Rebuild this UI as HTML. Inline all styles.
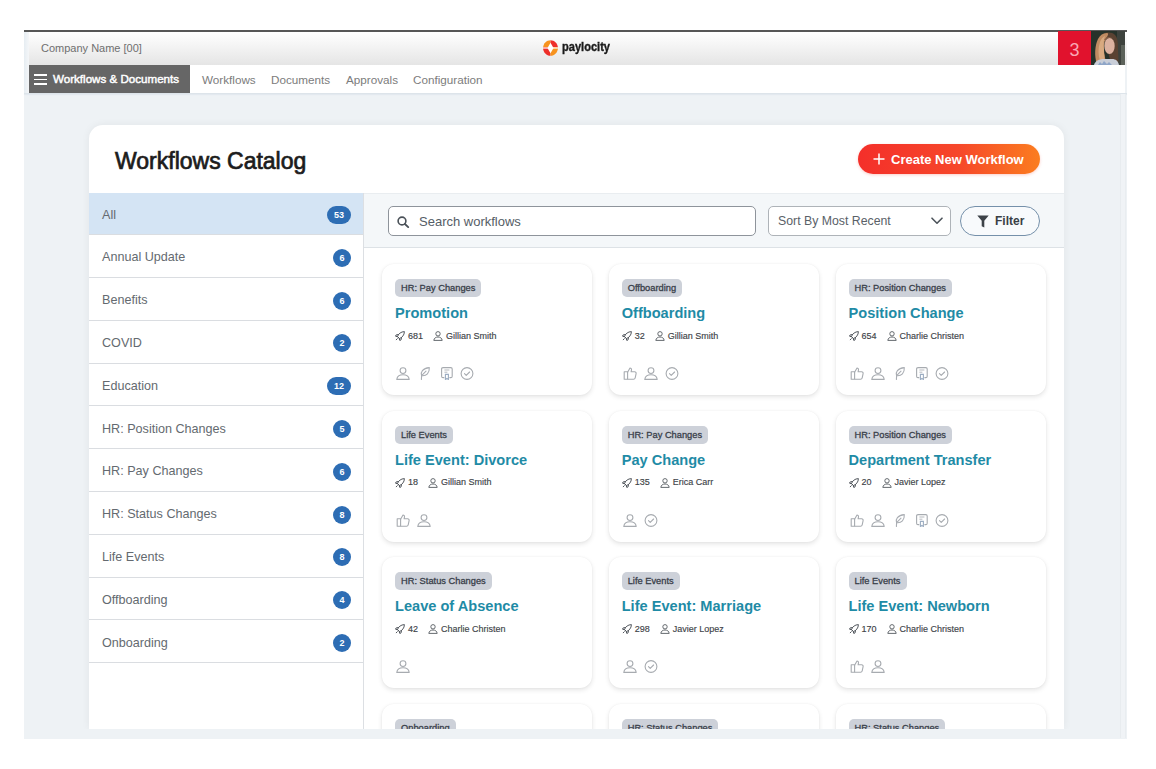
<!DOCTYPE html>
<html><head><meta charset="utf-8">
<style>
*{box-sizing:border-box;margin:0;padding:0}
html,body{width:1156px;height:769px;overflow:hidden;background:#fff;font-family:"Liberation Sans",sans-serif}
.abs{position:absolute}
#frame{position:absolute;left:24px;top:30px;width:1103px;height:709px;background:#eef2f5;overflow:hidden}
#topline{position:absolute;left:24px;top:30px;width:1103px;height:2px;background:#575757}
#hdr{position:absolute;left:24px;top:32px;width:1103px;height:33px;background:linear-gradient(#ffffff,#e5e5e5)}
#leftstrip{position:absolute;left:24px;top:32px;width:5px;height:62px;background:linear-gradient(90deg,#e6edf2,#f4f6f8)}
#company{position:absolute;left:41px;top:41px;font-size:11px;color:#6f6f6f;line-height:14px}
#nav{position:absolute;left:29px;top:65px;width:1096px;height:28px;background:#fff}
#navline{position:absolute;left:24px;top:93px;width:1103px;height:1px;background:#dde4ea;box-shadow:0 1px 1px rgba(120,150,180,0.12)}
#navdark{position:absolute;left:29px;top:65px;width:161px;height:28px;background:#666}
.ham{position:absolute;left:34px;width:13px;height:1.6px;background:#fff}
#navtitle{position:absolute;left:53px;top:72px;font-size:11.6px;color:#fff;line-height:14px;-webkit-text-stroke:0.45px #fff}
.navlink{position:absolute;top:72.5px;font-size:11.7px;color:#7c7c7c;line-height:14px}
#logo{position:absolute;left:542px;top:40px;width:17px;height:16px}
#logotext{position:absolute;left:562px;top:39px;font-size:13.5px;font-weight:bold;color:#1a1a1a;line-height:16px;transform:scaleX(0.82);transform-origin:0 0;-webkit-text-stroke:0.4px #1a1a1a}
#badge3{position:absolute;left:1058px;top:31px;width:33px;height:34px;background:#e1122d;color:#f9a6b4;font-size:18px;text-align:center;line-height:39px}
#avatar{position:absolute;left:1091px;top:31px;width:34px;height:34px}

#panel{position:absolute;left:89px;top:125px;width:975px;height:603.5px;background:#fff;border-radius:14px 14px 0 0;box-shadow:0 0 8px rgba(0,0,0,0.06);overflow:hidden}
#title{position:absolute;left:115px;top:148px;font-size:23px;color:#1c1c1c;line-height:26px;-webkit-text-stroke:0.7px #1c1c1c}
#createbtn{position:absolute;left:858px;top:144px;width:182px;height:30px;border-radius:15px;background:linear-gradient(90deg,#f42f2a 0%,#f6472a 55%,#fb7d1f 100%);color:#fff;box-shadow:0 1px 3px rgba(245,60,40,0.25)}
#createbtn span{position:absolute;left:33px;top:8px;font-size:13px;font-weight:bold;line-height:15px}
#createbtn i{position:absolute;left:15px;top:8px;width:12px;height:12px}

#sidebar{position:absolute;left:89px;top:192.5px;width:275px;height:536px;overflow:hidden;background:#fff;border-right:1px solid #dcdfe3}
.srow{position:absolute;left:0;width:274px;height:43px;border-bottom:1px solid #dadde1}
.srow span{position:absolute;left:13px;top:15px;font-size:12.6px;color:#646a70;line-height:15px}
.srow b{position:absolute;right:12px;top:13.5px;height:18px;min-width:18px;border-radius:9px;background:#2d6db4;color:#fff;font-size:9px;font-weight:bold;text-align:center;line-height:18px;padding:0 3px}
.srow b.w{width:24px}
.srow.sel{background:#d4e4f4}

#chead{position:absolute;left:364px;top:192.5px;width:700px;height:55.5px;background:#f4f7f9;border-bottom:1px solid #dde2e6;border-top:1px solid #e9edf0}
#search{position:absolute;left:388px;top:206px;width:368px;height:30px;border:1px solid #8e949b;border-radius:5px;background:#fff}
#search span{position:absolute;left:30px;top:7px;font-size:13px;color:#555d66;line-height:15px}
#sort{position:absolute;left:768px;top:206px;width:183px;height:30px;border:1px solid #aeb3b8;border-radius:5px;background:#fff}
#sort span{position:absolute;left:9px;top:7px;font-size:12.3px;color:#5a6168;line-height:15px}
#filter{position:absolute;left:960px;top:206px;width:80px;height:30px;border:1px solid #7590aa;border-radius:15px;background:#f8fafc}
#filter span{position:absolute;left:34px;top:7px;font-size:12px;font-weight:bold;color:#3a3f45;line-height:15px}

.card{position:absolute;width:210px;height:131px;background:#fff;border-radius:12px;box-shadow:0 2px 5px rgba(0,0,0,0.11),0 0 2px rgba(0,0,0,0.05)}
.tag{position:absolute;left:13px;top:15px;height:18px;border-radius:5px;background:#cdd1d9;color:#39404a;font-size:9.3px;line-height:18.5px;padding:0 6px;-webkit-text-stroke:0.3px #39404a}
.ttl{position:absolute;left:13px;top:41px;font-size:14.6px;font-weight:bold;color:#1f8ba6;line-height:17px;white-space:nowrap}
.meta{position:absolute;left:13px;top:66.5px;font-size:9px;color:#3e4348;line-height:11px;white-space:nowrap;-webkit-text-stroke:0.15px #3e4348}
.icons{position:absolute;left:14px;top:103px;height:14px}
.ic{width:14px;height:13px;margin-right:7.4px;vertical-align:top}
.mic{width:10px;height:10px;vertical-align:top;margin-right:3px;margin-top:0.5px}
.meta .n{margin-right:10px}
#clipbot{position:absolute;left:24px;top:728.5px;width:1103px;height:10.5px;background:#eef2f5}
</style></head><body>
<div id="frame"></div>
<div id="hdr"></div>
<div id="topline"></div>
<div id="leftstrip"></div>
<div id="company">Company Name [00]</div>
<div id="nav"></div>
<div id="navline"></div>
<div id="navdark"></div>
<div class="ham" style="top:74.2px"></div>
<div class="ham" style="top:78.8px"></div>
<div class="ham" style="top:83.4px"></div>
<div id="navtitle">Workflows &amp; Documents</div>
<div class="navlink" style="left:202px">Workflows</div>
<div class="navlink" style="left:271px">Documents</div>
<div class="navlink" style="left:346px">Approvals</div>
<div class="navlink" style="left:413px">Configuration</div>
<svg id="logo" viewBox="0 0 16 16"><path d="M8 0.2C4 0.2 0.6 3.5 0.6 8c0 .3 0 .6.1.9H8z" fill="#f7931e"/><path d="M8 0.2c4 0 7.4 3.3 7.4 7.8 0 .3 0 .6-.1.9H8z" fill="#ee2f2a"/><path d="M8 15.8C4 15.8.6 12.5.6 8c0-.3 0-.6.1-.9H8z" fill="#ee2f2a"/><path d="M8 15.8c4 0 7.4-3.3 7.4-7.8 0-.3 0-.6-.1-.9H8z" fill="#f7931e"/><path d="M8 2.8L11 8 8 13.2 5 8z" fill="#fff"/><rect x="0" y="7.4" width="16" height="1.2" fill="#fff"/></svg>
<div id="logotext">paylocity</div>
<div id="badge3">3</div>
<svg id="avatar" viewBox="0 0 34 34"><defs><filter id="bl" x="-5%" y="-5%" width="110%" height="110%"><feGaussianBlur stdDeviation="0.5"/></filter></defs><g filter="url(#bl)"><rect width="34" height="34" fill="#27332a"/><rect x="26" y="0" width="8" height="34" fill="#3d433c"/><rect x="30" y="14" width="4" height="20" fill="#5c625a"/><path d="M12 3c4-2 9-2 12 1 3 3 3 9 3 15 0 5 1 9 0 13H20z" fill="#5a4232"/><path d="M6 33C3 25 4 14 7 8c2-4 5-6 9-6 2 0 1 3-1 5-2 4-3 9-2 15 1 4 2 8 1 11z" fill="#c08c62"/><path d="M9 30c-2-6-2-13 0-19 1-3 3-5 5-6-1 3-2 8-1 13 0 5 1 9 0 12z" fill="#d8aa80"/><ellipse cx="18.5" cy="15" rx="5.2" ry="8" fill="#dcb2a0"/><path d="M13 9c2-3 6-4 9-2-2-1-6 0-8 2z" fill="#8a6248"/><path d="M3 34c1-4 5-6 10-6h8c4 0 6 2 7 6z" fill="#c9ced8"/><path d="M7 34l2-3 2 2 2-3 3 3 2-2 3 3z" fill="#8fa6c8"/></g></svg>

<div id="panel"></div>
<div id="title">Workflows Catalog</div>
<div id="createbtn"><svg style="position:absolute;left:15px;top:9px" width="12" height="12" viewBox="0 0 12 12"><path d="M6 0.5v11M0.5 6h11" stroke="#fff" stroke-width="1.5"/></svg><span>Create New Workflow</span></div>

<div id="sidebar"><div class="srow sel" style="top:0.00px;height:42.80px"><span>All</span><b class="w">53</b></div>
<div class="srow" style="top:42.80px;height:42.80px"><span>Annual Update</span><b>6</b></div>
<div class="srow" style="top:85.60px;height:42.80px"><span>Benefits</span><b>6</b></div>
<div class="srow" style="top:128.40px;height:42.80px"><span>COVID</span><b>2</b></div>
<div class="srow" style="top:171.20px;height:42.80px"><span>Education</span><b class="w">12</b></div>
<div class="srow" style="top:214.00px;height:42.80px"><span>HR: Position Changes</span><b>5</b></div>
<div class="srow" style="top:256.80px;height:42.80px"><span>HR: Pay Changes</span><b>6</b></div>
<div class="srow" style="top:299.60px;height:42.80px"><span>HR: Status Changes</span><b>8</b></div>
<div class="srow" style="top:342.40px;height:42.80px"><span>Life Events</span><b>8</b></div>
<div class="srow" style="top:385.20px;height:42.80px"><span>Offboarding</span><b>4</b></div>
<div class="srow" style="top:428.00px;height:42.80px"><span>Onboarding</span><b>2</b></div>
</div>
<div id="chead"></div>
<div id="search"><svg style="position:absolute;left:8px;top:9px" width="13" height="12" viewBox="0 0 13 12"><circle cx="5" cy="5" r="3.9" fill="none" stroke="#4a5158" stroke-width="1.6"/><path d="M7.9 8l3.3 3.2" stroke="#4a5158" stroke-width="1.8" stroke-linecap="round"/></svg><span>Search workflows</span></div>
<div id="sort"><span>Sort By Most Recent</span><svg style="position:absolute;left:162px;top:10px" width="12" height="8" viewBox="0 0 12 8"><path d="M1 1.2l5 5 5-5" fill="none" stroke="#4d545b" stroke-width="1.6" stroke-linecap="round" stroke-linejoin="round"/></svg></div>
<div id="filter"><svg style="position:absolute;left:15.5px;top:8px" width="12" height="13" viewBox="0 0 12 13"><path d="M0.3 0.6h11.4L7.3 5.8V12.6L4.7 11.2V5.8z" fill="#3d4248"/></svg><span>Filter</span></div>

<div id="cards" style="position:absolute;left:0;top:0;width:1156px;height:728.5px;overflow:hidden"><div class="card" style="left:382px;top:264px"><div class="tag">HR: Pay Changes</div><div class="ttl">Promotion</div><div class="meta"><svg class="mic" viewBox="0 0 10 10"><path d="M9.4 0.6C6 0.7 3.6 2.6 2.5 5.5l2 2C7.4 6.4 9.3 4 9.4 0.6z" fill="none" stroke="#4a4f55" stroke-width="0.95" stroke-linejoin="round"/><path d="M3.4 3.5L1.2 3.9 0.5 5.2l2.1 0.6M6.5 6.6L6.1 8.8 4.8 9.5 4.2 7.4M2.3 7.7L1.2 8.8" fill="none" stroke="#4a4f55" stroke-width="0.95" stroke-linejoin="round" stroke-linecap="round"/></svg><span class="n">681</span><svg class="mic" viewBox="0 0 10 10"><circle cx="5" cy="2.8" r="2.2" fill="none" stroke="#555a60" stroke-width="0.9"/><path d="M.8 9.4c.3-2.3 2-3.4 4.2-3.4s3.9 1.1 4.2 3.4z" fill="none" stroke="#555a60" stroke-width="0.9" stroke-linejoin="round"/></svg><span>Gillian Smith</span></div><div class="icons"><svg class="ic" viewBox="0 0 14 13"><circle cx="7" cy="3.6" r="2.9" fill="none" stroke="#a7abb0" stroke-width="1.1"/><path d="M.8 12.4c.4-3 3-4.6 6.2-4.6s5.8 1.6 6.2 4.6z" fill="none" stroke="#a7abb0" stroke-width="1.1" stroke-linejoin="round"/></svg><svg class="ic" viewBox="0 0 14 13"><path d="M4.6 8.7C3.2 5.2 5.6 1.2 12.3 0.6c.3 5.6-2.7 8.6-7.7 8.1z" fill="none" stroke="#a9adb3" stroke-width="1.1" stroke-linejoin="round"/><path d="M4.6 8.7L9 4.2M4.6 8.7L4.4 12.5" fill="none" stroke="#a9adb3" stroke-width="1.1" stroke-linecap="round"/></svg><svg class="ic" viewBox="0 0 14 13"><path d="M5.3 10.6H4c-.9 0-1.4-.5-1.4-1.4V1.9C2.6 1 3.1.6 4 .6h7.8c.9 0 1.4.4 1.4 1.3v7.3c0 .9-.5 1.4-1.4 1.4h-1.4" fill="none" stroke="#a7abb0" stroke-width="1.1"/><path d="M5.4 3h5M5.4 5.2h3" stroke="#b5b9be" stroke-width="1"/><path d="M6.4 7.4h3v5.1l-1.5-1.1-1.5 1.1z" fill="none" stroke="#9cadc2" stroke-width="1.1"/></svg><svg class="ic" viewBox="0 0 14 13"><circle cx="7" cy="6.5" r="5.9" fill="none" stroke="#a7abb0" stroke-width="1.1"/><path d="M4.5 6.7l1.7 1.6 3.4-3.3" fill="none" stroke="#a7abb0" stroke-width="1.1" stroke-linecap="round" stroke-linejoin="round"/></svg></div></div>
<div class="card" style="left:608.7px;top:264px"><div class="tag">Offboarding</div><div class="ttl">Offboarding</div><div class="meta"><svg class="mic" viewBox="0 0 10 10"><path d="M9.4 0.6C6 0.7 3.6 2.6 2.5 5.5l2 2C7.4 6.4 9.3 4 9.4 0.6z" fill="none" stroke="#4a4f55" stroke-width="0.95" stroke-linejoin="round"/><path d="M3.4 3.5L1.2 3.9 0.5 5.2l2.1 0.6M6.5 6.6L6.1 8.8 4.8 9.5 4.2 7.4M2.3 7.7L1.2 8.8" fill="none" stroke="#4a4f55" stroke-width="0.95" stroke-linejoin="round" stroke-linecap="round"/></svg><span class="n">32</span><svg class="mic" viewBox="0 0 10 10"><circle cx="5" cy="2.8" r="2.2" fill="none" stroke="#555a60" stroke-width="0.9"/><path d="M.8 9.4c.3-2.3 2-3.4 4.2-3.4s3.9 1.1 4.2 3.4z" fill="none" stroke="#555a60" stroke-width="0.9" stroke-linejoin="round"/></svg><span>Gillian Smith</span></div><div class="icons"><svg class="ic" viewBox="0 0 14 13"><path d="M1.2 4.8h3.4v7.4H1.2z" fill="none" stroke="#a7abb0" stroke-width="1.1" stroke-linejoin="round"/><path d="M4.6 5.2L7 1c1 0 1.7.8 1.5 1.8L8.1 4.8h3.6c1 0 1.6.8 1.4 1.8l-.9 4.2c-.2.8-.8 1.4-1.6 1.4H4.6" fill="none" stroke="#a7abb0" stroke-width="1.1" stroke-linejoin="round"/></svg><svg class="ic" viewBox="0 0 14 13"><circle cx="7" cy="3.6" r="2.9" fill="none" stroke="#a7abb0" stroke-width="1.1"/><path d="M.8 12.4c.4-3 3-4.6 6.2-4.6s5.8 1.6 6.2 4.6z" fill="none" stroke="#a7abb0" stroke-width="1.1" stroke-linejoin="round"/></svg><svg class="ic" viewBox="0 0 14 13"><circle cx="7" cy="6.5" r="5.9" fill="none" stroke="#a7abb0" stroke-width="1.1"/><path d="M4.5 6.7l1.7 1.6 3.4-3.3" fill="none" stroke="#a7abb0" stroke-width="1.1" stroke-linecap="round" stroke-linejoin="round"/></svg></div></div>
<div class="card" style="left:835.5px;top:264px"><div class="tag">HR: Position Changes</div><div class="ttl">Position Change</div><div class="meta"><svg class="mic" viewBox="0 0 10 10"><path d="M9.4 0.6C6 0.7 3.6 2.6 2.5 5.5l2 2C7.4 6.4 9.3 4 9.4 0.6z" fill="none" stroke="#4a4f55" stroke-width="0.95" stroke-linejoin="round"/><path d="M3.4 3.5L1.2 3.9 0.5 5.2l2.1 0.6M6.5 6.6L6.1 8.8 4.8 9.5 4.2 7.4M2.3 7.7L1.2 8.8" fill="none" stroke="#4a4f55" stroke-width="0.95" stroke-linejoin="round" stroke-linecap="round"/></svg><span class="n">654</span><svg class="mic" viewBox="0 0 10 10"><circle cx="5" cy="2.8" r="2.2" fill="none" stroke="#555a60" stroke-width="0.9"/><path d="M.8 9.4c.3-2.3 2-3.4 4.2-3.4s3.9 1.1 4.2 3.4z" fill="none" stroke="#555a60" stroke-width="0.9" stroke-linejoin="round"/></svg><span>Charlie Christen</span></div><div class="icons"><svg class="ic" viewBox="0 0 14 13"><path d="M1.2 4.8h3.4v7.4H1.2z" fill="none" stroke="#a7abb0" stroke-width="1.1" stroke-linejoin="round"/><path d="M4.6 5.2L7 1c1 0 1.7.8 1.5 1.8L8.1 4.8h3.6c1 0 1.6.8 1.4 1.8l-.9 4.2c-.2.8-.8 1.4-1.6 1.4H4.6" fill="none" stroke="#a7abb0" stroke-width="1.1" stroke-linejoin="round"/></svg><svg class="ic" viewBox="0 0 14 13"><circle cx="7" cy="3.6" r="2.9" fill="none" stroke="#a7abb0" stroke-width="1.1"/><path d="M.8 12.4c.4-3 3-4.6 6.2-4.6s5.8 1.6 6.2 4.6z" fill="none" stroke="#a7abb0" stroke-width="1.1" stroke-linejoin="round"/></svg><svg class="ic" viewBox="0 0 14 13"><path d="M4.6 8.7C3.2 5.2 5.6 1.2 12.3 0.6c.3 5.6-2.7 8.6-7.7 8.1z" fill="none" stroke="#a9adb3" stroke-width="1.1" stroke-linejoin="round"/><path d="M4.6 8.7L9 4.2M4.6 8.7L4.4 12.5" fill="none" stroke="#a9adb3" stroke-width="1.1" stroke-linecap="round"/></svg><svg class="ic" viewBox="0 0 14 13"><path d="M5.3 10.6H4c-.9 0-1.4-.5-1.4-1.4V1.9C2.6 1 3.1.6 4 .6h7.8c.9 0 1.4.4 1.4 1.3v7.3c0 .9-.5 1.4-1.4 1.4h-1.4" fill="none" stroke="#a7abb0" stroke-width="1.1"/><path d="M5.4 3h5M5.4 5.2h3" stroke="#b5b9be" stroke-width="1"/><path d="M6.4 7.4h3v5.1l-1.5-1.1-1.5 1.1z" fill="none" stroke="#9cadc2" stroke-width="1.1"/></svg><svg class="ic" viewBox="0 0 14 13"><circle cx="7" cy="6.5" r="5.9" fill="none" stroke="#a7abb0" stroke-width="1.1"/><path d="M4.5 6.7l1.7 1.6 3.4-3.3" fill="none" stroke="#a7abb0" stroke-width="1.1" stroke-linecap="round" stroke-linejoin="round"/></svg></div></div>
<div class="card" style="left:382px;top:410.5px"><div class="tag">Life Events</div><div class="ttl">Life Event: Divorce</div><div class="meta"><svg class="mic" viewBox="0 0 10 10"><path d="M9.4 0.6C6 0.7 3.6 2.6 2.5 5.5l2 2C7.4 6.4 9.3 4 9.4 0.6z" fill="none" stroke="#4a4f55" stroke-width="0.95" stroke-linejoin="round"/><path d="M3.4 3.5L1.2 3.9 0.5 5.2l2.1 0.6M6.5 6.6L6.1 8.8 4.8 9.5 4.2 7.4M2.3 7.7L1.2 8.8" fill="none" stroke="#4a4f55" stroke-width="0.95" stroke-linejoin="round" stroke-linecap="round"/></svg><span class="n">18</span><svg class="mic" viewBox="0 0 10 10"><circle cx="5" cy="2.8" r="2.2" fill="none" stroke="#555a60" stroke-width="0.9"/><path d="M.8 9.4c.3-2.3 2-3.4 4.2-3.4s3.9 1.1 4.2 3.4z" fill="none" stroke="#555a60" stroke-width="0.9" stroke-linejoin="round"/></svg><span>Gillian Smith</span></div><div class="icons"><svg class="ic" viewBox="0 0 14 13"><path d="M1.2 4.8h3.4v7.4H1.2z" fill="none" stroke="#a7abb0" stroke-width="1.1" stroke-linejoin="round"/><path d="M4.6 5.2L7 1c1 0 1.7.8 1.5 1.8L8.1 4.8h3.6c1 0 1.6.8 1.4 1.8l-.9 4.2c-.2.8-.8 1.4-1.6 1.4H4.6" fill="none" stroke="#a7abb0" stroke-width="1.1" stroke-linejoin="round"/></svg><svg class="ic" viewBox="0 0 14 13"><circle cx="7" cy="3.6" r="2.9" fill="none" stroke="#a7abb0" stroke-width="1.1"/><path d="M.8 12.4c.4-3 3-4.6 6.2-4.6s5.8 1.6 6.2 4.6z" fill="none" stroke="#a7abb0" stroke-width="1.1" stroke-linejoin="round"/></svg></div></div>
<div class="card" style="left:608.7px;top:410.5px"><div class="tag">HR: Pay Changes</div><div class="ttl">Pay Change</div><div class="meta"><svg class="mic" viewBox="0 0 10 10"><path d="M9.4 0.6C6 0.7 3.6 2.6 2.5 5.5l2 2C7.4 6.4 9.3 4 9.4 0.6z" fill="none" stroke="#4a4f55" stroke-width="0.95" stroke-linejoin="round"/><path d="M3.4 3.5L1.2 3.9 0.5 5.2l2.1 0.6M6.5 6.6L6.1 8.8 4.8 9.5 4.2 7.4M2.3 7.7L1.2 8.8" fill="none" stroke="#4a4f55" stroke-width="0.95" stroke-linejoin="round" stroke-linecap="round"/></svg><span class="n">135</span><svg class="mic" viewBox="0 0 10 10"><circle cx="5" cy="2.8" r="2.2" fill="none" stroke="#555a60" stroke-width="0.9"/><path d="M.8 9.4c.3-2.3 2-3.4 4.2-3.4s3.9 1.1 4.2 3.4z" fill="none" stroke="#555a60" stroke-width="0.9" stroke-linejoin="round"/></svg><span>Erica Carr</span></div><div class="icons"><svg class="ic" viewBox="0 0 14 13"><circle cx="7" cy="3.6" r="2.9" fill="none" stroke="#a7abb0" stroke-width="1.1"/><path d="M.8 12.4c.4-3 3-4.6 6.2-4.6s5.8 1.6 6.2 4.6z" fill="none" stroke="#a7abb0" stroke-width="1.1" stroke-linejoin="round"/></svg><svg class="ic" viewBox="0 0 14 13"><circle cx="7" cy="6.5" r="5.9" fill="none" stroke="#a7abb0" stroke-width="1.1"/><path d="M4.5 6.7l1.7 1.6 3.4-3.3" fill="none" stroke="#a7abb0" stroke-width="1.1" stroke-linecap="round" stroke-linejoin="round"/></svg></div></div>
<div class="card" style="left:835.5px;top:410.5px"><div class="tag">HR: Position Changes</div><div class="ttl">Department Transfer</div><div class="meta"><svg class="mic" viewBox="0 0 10 10"><path d="M9.4 0.6C6 0.7 3.6 2.6 2.5 5.5l2 2C7.4 6.4 9.3 4 9.4 0.6z" fill="none" stroke="#4a4f55" stroke-width="0.95" stroke-linejoin="round"/><path d="M3.4 3.5L1.2 3.9 0.5 5.2l2.1 0.6M6.5 6.6L6.1 8.8 4.8 9.5 4.2 7.4M2.3 7.7L1.2 8.8" fill="none" stroke="#4a4f55" stroke-width="0.95" stroke-linejoin="round" stroke-linecap="round"/></svg><span class="n">20</span><svg class="mic" viewBox="0 0 10 10"><circle cx="5" cy="2.8" r="2.2" fill="none" stroke="#555a60" stroke-width="0.9"/><path d="M.8 9.4c.3-2.3 2-3.4 4.2-3.4s3.9 1.1 4.2 3.4z" fill="none" stroke="#555a60" stroke-width="0.9" stroke-linejoin="round"/></svg><span>Javier Lopez</span></div><div class="icons"><svg class="ic" viewBox="0 0 14 13"><path d="M1.2 4.8h3.4v7.4H1.2z" fill="none" stroke="#a7abb0" stroke-width="1.1" stroke-linejoin="round"/><path d="M4.6 5.2L7 1c1 0 1.7.8 1.5 1.8L8.1 4.8h3.6c1 0 1.6.8 1.4 1.8l-.9 4.2c-.2.8-.8 1.4-1.6 1.4H4.6" fill="none" stroke="#a7abb0" stroke-width="1.1" stroke-linejoin="round"/></svg><svg class="ic" viewBox="0 0 14 13"><circle cx="7" cy="3.6" r="2.9" fill="none" stroke="#a7abb0" stroke-width="1.1"/><path d="M.8 12.4c.4-3 3-4.6 6.2-4.6s5.8 1.6 6.2 4.6z" fill="none" stroke="#a7abb0" stroke-width="1.1" stroke-linejoin="round"/></svg><svg class="ic" viewBox="0 0 14 13"><path d="M4.6 8.7C3.2 5.2 5.6 1.2 12.3 0.6c.3 5.6-2.7 8.6-7.7 8.1z" fill="none" stroke="#a9adb3" stroke-width="1.1" stroke-linejoin="round"/><path d="M4.6 8.7L9 4.2M4.6 8.7L4.4 12.5" fill="none" stroke="#a9adb3" stroke-width="1.1" stroke-linecap="round"/></svg><svg class="ic" viewBox="0 0 14 13"><path d="M5.3 10.6H4c-.9 0-1.4-.5-1.4-1.4V1.9C2.6 1 3.1.6 4 .6h7.8c.9 0 1.4.4 1.4 1.3v7.3c0 .9-.5 1.4-1.4 1.4h-1.4" fill="none" stroke="#a7abb0" stroke-width="1.1"/><path d="M5.4 3h5M5.4 5.2h3" stroke="#b5b9be" stroke-width="1"/><path d="M6.4 7.4h3v5.1l-1.5-1.1-1.5 1.1z" fill="none" stroke="#9cadc2" stroke-width="1.1"/></svg><svg class="ic" viewBox="0 0 14 13"><circle cx="7" cy="6.5" r="5.9" fill="none" stroke="#a7abb0" stroke-width="1.1"/><path d="M4.5 6.7l1.7 1.6 3.4-3.3" fill="none" stroke="#a7abb0" stroke-width="1.1" stroke-linecap="round" stroke-linejoin="round"/></svg></div></div>
<div class="card" style="left:382px;top:557px"><div class="tag">HR: Status Changes</div><div class="ttl">Leave of Absence</div><div class="meta"><svg class="mic" viewBox="0 0 10 10"><path d="M9.4 0.6C6 0.7 3.6 2.6 2.5 5.5l2 2C7.4 6.4 9.3 4 9.4 0.6z" fill="none" stroke="#4a4f55" stroke-width="0.95" stroke-linejoin="round"/><path d="M3.4 3.5L1.2 3.9 0.5 5.2l2.1 0.6M6.5 6.6L6.1 8.8 4.8 9.5 4.2 7.4M2.3 7.7L1.2 8.8" fill="none" stroke="#4a4f55" stroke-width="0.95" stroke-linejoin="round" stroke-linecap="round"/></svg><span class="n">42</span><svg class="mic" viewBox="0 0 10 10"><circle cx="5" cy="2.8" r="2.2" fill="none" stroke="#555a60" stroke-width="0.9"/><path d="M.8 9.4c.3-2.3 2-3.4 4.2-3.4s3.9 1.1 4.2 3.4z" fill="none" stroke="#555a60" stroke-width="0.9" stroke-linejoin="round"/></svg><span>Charlie Christen</span></div><div class="icons"><svg class="ic" viewBox="0 0 14 13"><circle cx="7" cy="3.6" r="2.9" fill="none" stroke="#a7abb0" stroke-width="1.1"/><path d="M.8 12.4c.4-3 3-4.6 6.2-4.6s5.8 1.6 6.2 4.6z" fill="none" stroke="#a7abb0" stroke-width="1.1" stroke-linejoin="round"/></svg></div></div>
<div class="card" style="left:608.7px;top:557px"><div class="tag">Life Events</div><div class="ttl">Life Event: Marriage</div><div class="meta"><svg class="mic" viewBox="0 0 10 10"><path d="M9.4 0.6C6 0.7 3.6 2.6 2.5 5.5l2 2C7.4 6.4 9.3 4 9.4 0.6z" fill="none" stroke="#4a4f55" stroke-width="0.95" stroke-linejoin="round"/><path d="M3.4 3.5L1.2 3.9 0.5 5.2l2.1 0.6M6.5 6.6L6.1 8.8 4.8 9.5 4.2 7.4M2.3 7.7L1.2 8.8" fill="none" stroke="#4a4f55" stroke-width="0.95" stroke-linejoin="round" stroke-linecap="round"/></svg><span class="n">298</span><svg class="mic" viewBox="0 0 10 10"><circle cx="5" cy="2.8" r="2.2" fill="none" stroke="#555a60" stroke-width="0.9"/><path d="M.8 9.4c.3-2.3 2-3.4 4.2-3.4s3.9 1.1 4.2 3.4z" fill="none" stroke="#555a60" stroke-width="0.9" stroke-linejoin="round"/></svg><span>Javier Lopez</span></div><div class="icons"><svg class="ic" viewBox="0 0 14 13"><circle cx="7" cy="3.6" r="2.9" fill="none" stroke="#a7abb0" stroke-width="1.1"/><path d="M.8 12.4c.4-3 3-4.6 6.2-4.6s5.8 1.6 6.2 4.6z" fill="none" stroke="#a7abb0" stroke-width="1.1" stroke-linejoin="round"/></svg><svg class="ic" viewBox="0 0 14 13"><circle cx="7" cy="6.5" r="5.9" fill="none" stroke="#a7abb0" stroke-width="1.1"/><path d="M4.5 6.7l1.7 1.6 3.4-3.3" fill="none" stroke="#a7abb0" stroke-width="1.1" stroke-linecap="round" stroke-linejoin="round"/></svg></div></div>
<div class="card" style="left:835.5px;top:557px"><div class="tag">Life Events</div><div class="ttl">Life Event: Newborn</div><div class="meta"><svg class="mic" viewBox="0 0 10 10"><path d="M9.4 0.6C6 0.7 3.6 2.6 2.5 5.5l2 2C7.4 6.4 9.3 4 9.4 0.6z" fill="none" stroke="#4a4f55" stroke-width="0.95" stroke-linejoin="round"/><path d="M3.4 3.5L1.2 3.9 0.5 5.2l2.1 0.6M6.5 6.6L6.1 8.8 4.8 9.5 4.2 7.4M2.3 7.7L1.2 8.8" fill="none" stroke="#4a4f55" stroke-width="0.95" stroke-linejoin="round" stroke-linecap="round"/></svg><span class="n">170</span><svg class="mic" viewBox="0 0 10 10"><circle cx="5" cy="2.8" r="2.2" fill="none" stroke="#555a60" stroke-width="0.9"/><path d="M.8 9.4c.3-2.3 2-3.4 4.2-3.4s3.9 1.1 4.2 3.4z" fill="none" stroke="#555a60" stroke-width="0.9" stroke-linejoin="round"/></svg><span>Charlie Christen</span></div><div class="icons"><svg class="ic" viewBox="0 0 14 13"><path d="M1.2 4.8h3.4v7.4H1.2z" fill="none" stroke="#a7abb0" stroke-width="1.1" stroke-linejoin="round"/><path d="M4.6 5.2L7 1c1 0 1.7.8 1.5 1.8L8.1 4.8h3.6c1 0 1.6.8 1.4 1.8l-.9 4.2c-.2.8-.8 1.4-1.6 1.4H4.6" fill="none" stroke="#a7abb0" stroke-width="1.1" stroke-linejoin="round"/></svg><svg class="ic" viewBox="0 0 14 13"><circle cx="7" cy="3.6" r="2.9" fill="none" stroke="#a7abb0" stroke-width="1.1"/><path d="M.8 12.4c.4-3 3-4.6 6.2-4.6s5.8 1.6 6.2 4.6z" fill="none" stroke="#a7abb0" stroke-width="1.1" stroke-linejoin="round"/></svg></div></div>
<div class="card" style="left:382px;top:703.5px"><div class="tag">Onboarding</div></div>
<div class="card" style="left:608.7px;top:703.5px"><div class="tag">HR: Status Changes</div></div>
<div class="card" style="left:835.5px;top:703.5px"><div class="tag">HR: Status Changes</div></div>
</div>
<div id="clipbot"></div>
<div style="position:absolute;left:1120px;top:94px;width:6px;height:644px;border-left:1px solid #e8ecef;border-right:1px solid #e9edf0;background:#f0f3f6"></div>
</body></html>
